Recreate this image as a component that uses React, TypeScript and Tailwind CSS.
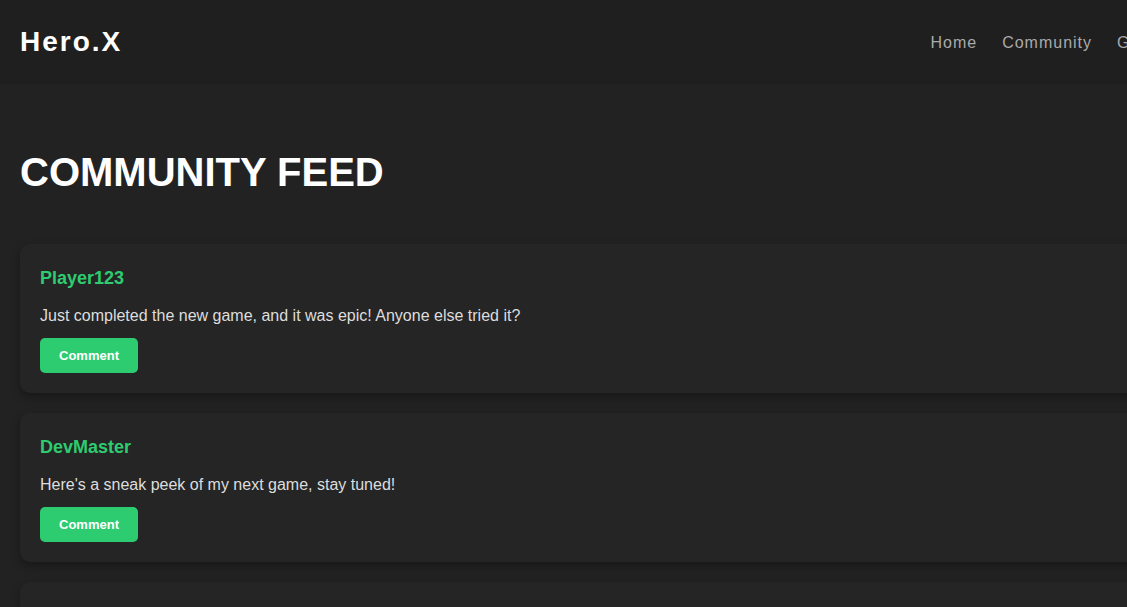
const navItems = ["Home", "Community", "Games", "Profile"];

const posts = [
  {
    user: "Player123",
    text: "Just completed the new game, and it was epic! Anyone else tried it?",
  },
  {
    user: "DevMaster",
    text: "Here's a sneak peek of my next game, stay tuned!",
  },
  {
    user: "GamerGirl",
    text: "Looking for teammates for the weekend tournament. Who's in?",
  },
];

const Header = () => (
  <header className="h-[84px] flex items-center px-5 bg-[#1f1f1f]">
    <h1 className="text-[28px] font-bold tracking-[2px] text-white leading-none">
      Hero.X
    </h1>
    <nav className="ml-auto mt-[2px]">
      <ul className="flex gap-[25px]">
        {navItems.map((item) => (
          <li
            key={item}
            className="text-[16px] tracking-[1px] text-[#aaaaaa] cursor-pointer hover:text-white"
          >
            {item}
          </li>
        ))}
      </ul>
    </nav>
  </header>
);

const PostCard = ({ user, text }: { user: string; text: string }) => (
  <div className="bg-[#252525] rounded-[10px] p-5 shadow-[0_4px_10px_rgba(0,0,0,0.3)]">
    <h3 className="text-[18px] leading-[29px] font-bold text-[#2ecc71]">
      {user}
    </h3>
    <p className="mt-[10px] text-[16px] leading-[26px] text-[#dddddd]">
      {text}
    </p>
    <button className="mt-[9px] h-[35px] w-[98px] rounded-[5px] bg-[#2ecc71] text-[13px] font-bold text-white">
      Comment
    </button>
  </div>
);

export default function App() {
  return (
    <div className="w-full h-[607px] overflow-hidden bg-[#222222]">
      <div
        className="w-[1271px] min-h-[607px] bg-[#222222] text-white"
        style={{ fontFamily: '"Liberation Sans", Arial, sans-serif' }}
      >
        <Header />
        <main className="px-5 pt-[65px] pb-10">
          <h2 className="text-[40px] leading-[46px] font-bold text-white">
            COMMUNITY FEED
          </h2>
          <div className="mt-[49px] flex flex-col gap-5">
            {posts.map((post) => (
              <PostCard key={post.user} user={post.user} text={post.text} />
            ))}
          </div>
        </main>
      </div>
    </div>
  );
}
